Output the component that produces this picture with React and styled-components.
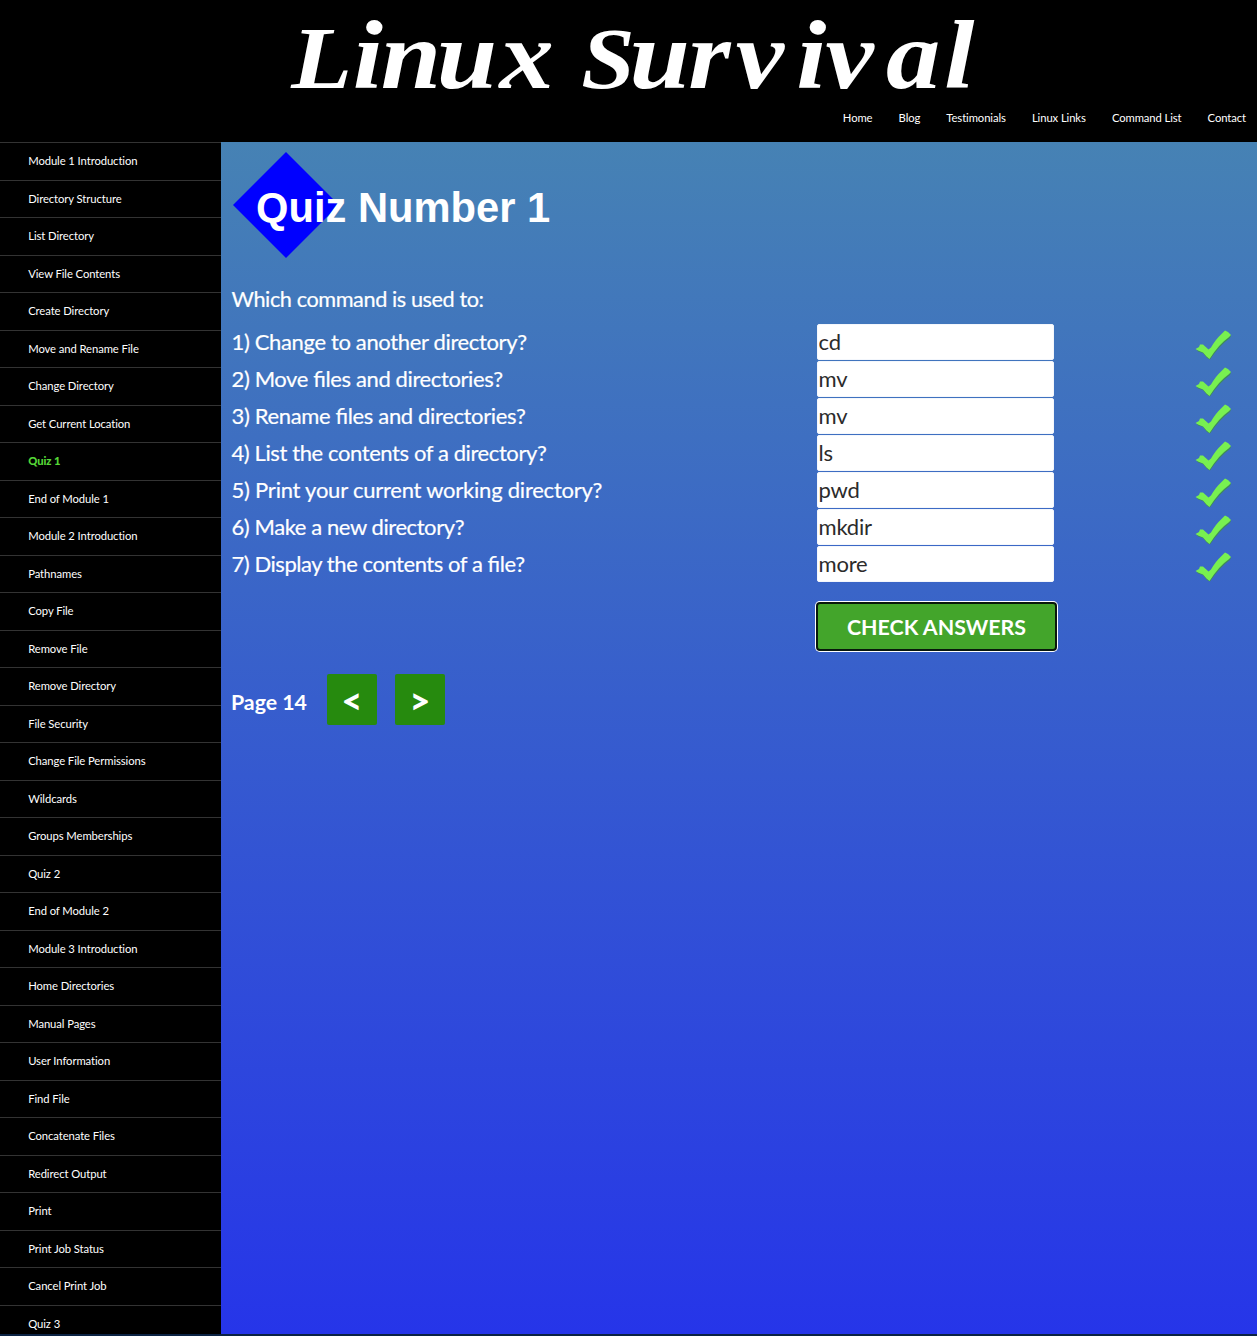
import React from "react";
import styled, { createGlobalStyle } from "styled-components";

const GlobalStyle = createGlobalStyle`
  * { box-sizing: border-box; }
  html, body { margin: 0; padding: 0; background: #000; }
  body { font-family: Lato, "Liberation Sans", sans-serif; color: #fff; overflow: hidden; }
`;

const Page = styled.div`
  display: flex;
  flex-direction: column;
  width: 1257px;
  height: 1336px;
  overflow: hidden;
  border-bottom: 2px solid #0b2344;
`;

const Header = styled.header`
  display: flex;
  flex-direction: column;
  flex: 0 0 142px;
  background: #000;
`;

const Logo = styled.svg`
  display: block;
  width: 1257px;
  height: 106px;
  fill: #fff;
  font: italic 700 97px "Liberation Serif", serif;
`;

const Capital = styled.tspan`
  font-size: ${(p) => p.$size}px;
`;

const TopNav = styled.nav`
  display: flex;
  justify-content: flex-end;
  gap: 26.1px;
  padding-right: 11px;
`;

const TopLink = styled.a`
  font-size: 11.25px;
  line-height: 24px;
  letter-spacing: -0.09px;
  white-space: nowrap;
`;

const Body = styled.div`
  display: flex;
  flex: 1;
  min-height: 0;
`;

const Sidebar = styled.nav`
  flex: 0 0 221px;
  background: #000;
  overflow: hidden;
`;

const SideLink = styled.a`
  display: block;
  height: 37.5px;
  padding-left: 28.2px;
  border-top: 1px solid #333;
  font-size: 11.25px;
  line-height: 36px;
  letter-spacing: -0.08px;
  font-weight: ${(p) => (p.$active ? 900 : 400)};
  color: ${(p) => (p.$active ? "#55d737" : "#fff")};
`;

const Main = styled.main`
  flex: 1;
  padding: 10px 11px 0 10px;
  background: linear-gradient(#4682b4, #2635e9);
`;

const TitleRow = styled.div`
  display: flex;
  align-items: center;
  height: 106px;
  padding-left: 2px;
`;

const Diamond = styled.svg`
  width: 106px;
  height: 106px;
  fill: #0000ff;
`;

const Title = styled.h1`
  margin: 5px 0 0 -83px;
  font: 700 41.7px/48px "Liberation Sans", Arial, sans-serif;
`;

const Prompt = styled.p`
  margin: 23px 0 0;
  padding-left: 0.5px;
  font-size: 21.7px;
  line-height: 36px;
  letter-spacing: -0.42px;
  -webkit-text-stroke: 0.2px #fff;
`;

const Questions = styled.div`
  display: flex;
  flex-direction: column;
  margin-top: 7px;
`;

const Question = styled.div`
  display: grid;
  grid-template-columns: 586px 1fr 51px;
  height: 37px;
`;

const QuestionText = styled.label`
  padding-left: 0.5px;
  font-size: 22px;
  line-height: 35px;
  letter-spacing: ${(p) => p.$tracking}px;
  font-feature-settings: "liga" 1;
  -webkit-text-stroke: 0.2px #fff;
`;

const Answer = styled.input`
  width: 237px;
  height: 36px;
  padding: 0 1px 2px 0.5px;
  border: 1px solid #f4f7fc;
  border-radius: 2px;
  background: #fff;
  color: #2b2b2b;
  font: 400 22px Lato, sans-serif;
  letter-spacing: -0.2px;
  outline: none;
`;

const Tick = styled.svg`
  width: 38px;
  height: 30px;
  margin: 6px 0 0;
  justify-self: start;
`;

const CheckButton = styled.button`
  display: block;
  width: 237px;
  height: 45px;
  margin: 21px 0 0 587px;
  padding: 0;
  border: 0;
  border-radius: 2px;
  background: #43a52b;
  box-shadow: 0 0 0 2px #08180c, 0 0 0 3px #fff;
  color: #fff;
  font: 700 21.4px Lato, sans-serif;
`;

const Pager = styled.div`
  display: flex;
  align-items: center;
  margin-top: 25px;
  height: 51px;
`;

const PageLabel = styled.span`
  width: 96px;
  font-size: 21.3px;
  font-weight: 700;
  padding-top: 5px;
`;

const PageButton = styled.button`
  width: 50px;
  height: 51px;
  margin-right: 18px;
  padding: 0;
  border: 0;
  border-radius: 2px;
  background: #268a0e;
  color: #fff;
  font: 900 36px Lato, sans-serif;
`;

const topLinks = ["Home", "Blog", "Testimonials", "Linux Links", "Command List", "Contact"];

const sideLinks = [
  "Module 1 Introduction", "Directory Structure", "List Directory", "View File Contents",
  "Create Directory", "Move and Rename File", "Change Directory", "Get Current Location",
  "Quiz 1", "End of Module 1", "Module 2 Introduction", "Pathnames", "Copy File",
  "Remove File", "Remove Directory", "File Security", "Change File Permissions", "Wildcards",
  "Groups Memberships", "Quiz 2", "End of Module 2", "Module 3 Introduction",
  "Home Directories", "Manual Pages", "User Information", "Find File", "Concatenate Files",
  "Redirect Output", "Print", "Print Job Status", "Cancel Print Job", "Quiz 3",
];

const questions = [
  ["Change to another directory?", "cd", -0.35],
  ["Move files and directories?", "mv", -0.38],
  ["Rename files and directories?", "mv", -0.35],
  ["List the contents of a directory?", "ls", -0.4],
  ["Print your current working directory?", "pwd", -0.23],
  ["Make a new directory?", "mkdir", -0.42],
  ["Display the contents of a file?", "more", -0.44],
];

export default function App() {
  return (
    <Page>
      <GlobalStyle />
      <Header>
        <Logo viewBox="0 0 1257 106">
          <g transform="translate(0 88) scale(1.12 1)">
            <text x="260 315 340 390 446 496 519 562 614.5 657 711 737 791 843">
              <Capital $size={89}>L</Capital>inux <Capital $size={86}>S</Capital>urvival
            </text>
          </g>
        </Logo>
        <TopNav>
          {topLinks.map((t) => <TopLink key={t}>{t}</TopLink>)}
        </TopNav>
      </Header>
      <Body>
        <Sidebar>
          {sideLinks.map((t) => <SideLink key={t} $active={t === "Quiz 1"}>{t}</SideLink>)}
        </Sidebar>
        <Main>
          <TitleRow>
            <Diamond viewBox="0 0 106 106"><path d="M53 0L106 53L53 106L0 53Z" /></Diamond>
            <Title>Quiz Number 1</Title>
          </TitleRow>
          <Prompt>Which command is used to:</Prompt>
          <Questions>
            {questions.map(([q, a, tracking], i) => (
              <Question key={q}>
                <QuestionText $tracking={tracking}>{`${i + 1}) ${q}`}</QuestionText>
                <Answer defaultValue={a} />
                <Tick viewBox="0 0 38 30">
                  <path
                    d="M2 20L7 15L15 21Q22 8 30 1L36 5.500L35 8Q25 15 15 29.500L12 28L8 23L3 21.500Z"
                    fill="#3f8a5a"
                  />
                  <path
                    d="M.5 19L4 17L5 14.500L8 14.500L13.500 19.500L16 17.500Q21 9 26 4.500L30 .5L33 2L36 5L33.500 7.500Q24 14 14.500 29L11.500 26.500L8 22.500L3 20.500Z"
                    fill="#78f050"
                  />
                </Tick>
              </Question>
            ))}
          </Questions>
          <CheckButton>CHECK ANSWERS</CheckButton>
          <Pager>
            <PageLabel>Page 14</PageLabel>
            <PageButton>&lt;</PageButton>
            <PageButton>&gt;</PageButton>
          </Pager>
        </Main>
      </Body>
    </Page>
  );
}
